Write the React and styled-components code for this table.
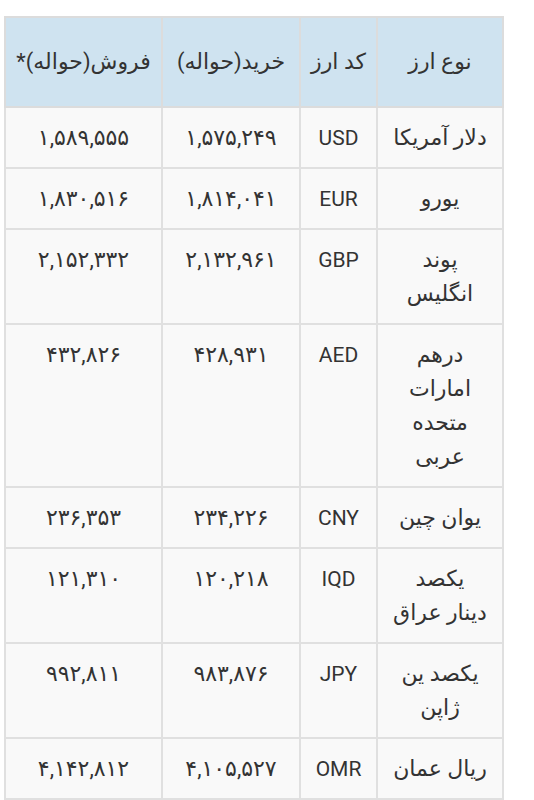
import React from "react";
import styled, { createGlobalStyle } from "styled-components";

let GlobalStyle = createGlobalStyle`
  body {
    margin: 0;
    background: #fff;
    font-family: Roboto, "DejaVu Sans", "Noto Sans", sans-serif;
  }
`;

let Page = styled.div`
  padding: 16px 0 0 4px;
`;

let Table = styled.table`
  direction: rtl;
  width: 498px;
  border-collapse: collapse;
  table-layout: fixed;
  color: #333;
  font-size: 22px;
  line-height: 34px;
`;

let Col = styled.col`
  width: ${(p) => p.$w}px;
`;

let HeadCell = styled.th`
  background: #cfe3f0;
  border: 2px solid #dcdcdc;
  font-weight: normal;
  height: 88px;
  padding: 0 6px;
  text-align: center;
  vertical-align: middle;
`;

let Cell = styled.td`
  background: #f9f9f9;
  border: 2px solid #e0e0e0;
  padding: 13px 10px 12px;
  text-align: center;
  vertical-align: top;
  white-space: pre-line;
  font-size: ${(p) => (p.$latin ? "21px" : "inherit")};
`;

let columns = [
  { title: "نوع ارز", w: 126 },
  { title: "کد ارز", w: 77 },
  { title: "خرید(حواله)", w: 138 },
  { title: "فروش(حواله)*", w: 157 },
];

let rows = [
  ["دلار آمریکا", "USD", "۱,۵۷۵,۲۴۹", "۱,۵۸۹,۵۵۵"],
  ["یورو", "EUR", "۱,۸۱۴,۰۴۱", "۱,۸۳۰,۵۱۶"],
  ["پوند انگلیس", "GBP", "۲,۱۳۲,۹۶۱", "۲,۱۵۲,۳۳۲"],
  ["درهم امارات متحده عربی", "AED", "۴۲۸,۹۳۱", "۴۳۲,۸۲۶"],
  ["یوان چین", "CNY", "۲۳۴,۲۲۶", "۲۳۶,۳۵۳"],
  ["یکصد\nدینار عراق", "IQD", "۱۲۰,۲۱۸", "۱۲۱,۳۱۰"],
  ["یکصد ین ژاپن", "JPY", "۹۸۳,۸۷۶", "۹۹۲,۸۱۱"],
  ["ریال عمان", "OMR", "۴,۱۰۵,۵۲۷", "۴,۱۴۲,۸۱۲"],
];

let App = () => {
  return (
    <Page>
      <GlobalStyle />
      <Table>
        <colgroup>
          {columns.map((c) => (
            <Col key={c.title} $w={c.w} />
          ))}
        </colgroup>
        <thead>
          <tr>
            {columns.map((c) => (
              <HeadCell key={c.title}>{c.title}</HeadCell>
            ))}
          </tr>
        </thead>
        <tbody>
          {rows.map((row) => (
            <tr key={row[1]}>
              <Cell>{row[0]}</Cell>
              <Cell $latin>{row[1]}</Cell>
              <Cell>{row[2]}</Cell>
              <Cell>{row[3]}</Cell>
            </tr>
          ))}
        </tbody>
      </Table>
    </Page>
  );
};

export default App;
